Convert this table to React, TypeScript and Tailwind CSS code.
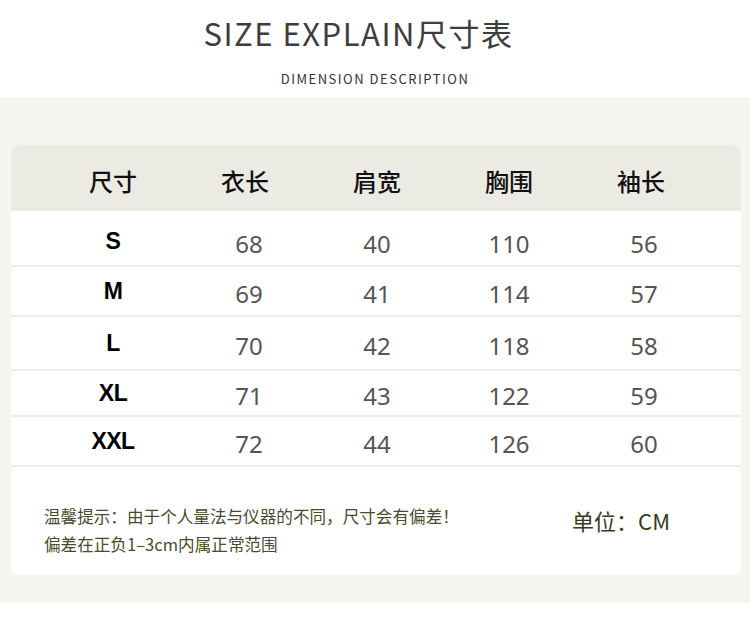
import React from "react";

const rows = [
  { size: "S", h: "h-[56px] pt-[6px]", v: ["68", "40", "110", "56"] },
  { size: "M", h: "h-[50px]", v: ["69", "41", "114", "57"] },
  { size: "L", h: "h-[54px]", v: ["70", "42", "118", "58"] },
  { size: "XL", h: "h-[46px]", v: ["71", "43", "122", "59"] },
  { size: "XXL", h: "h-[50px]", v: ["72", "44", "126", "60"] },
];

const heads = ["尺寸", "衣长", "肩宽", "胸围", "袖长"];
const shift = ["pl-[8px]", "pl-0", "pl-0", "pl-[6px]"];

export default function App() {
  return (
    <div className="h-[618px] w-[750px] bg-white font-['Noto_Sans','Noto_Sans_CJK_SC',sans-serif]">
      <div className="flex h-[97px] flex-col items-center">
        <h1 className="mt-[10px] h-[46px] pr-[33px] text-[31px] leading-[46px] font-normal tracking-[1.5px] text-[#3d3d3d] font-['Noto_Sans_CJK_SC',sans-serif]">
          SIZE EXPLAIN尺寸表
        </h1>
        <p className="mt-[14px] text-[13px] leading-[18px] tracking-[1.5px] text-[#333] font-['Noto_Sans_CJK_SC',sans-serif]">
          DIMENSION DESCRIPTION
        </p>
      </div>

      <div className="h-[506px] bg-[#f6f6f1] px-[11px] pt-[48px]">
        <div className="w-[730px] overflow-hidden rounded-[8px] bg-white shadow-[0_0_2px_rgba(0,0,0,0.04)]">
          <div className="grid h-[66px] grid-cols-[132px_132px_132px_132px_132px] items-center bg-[#ebeae3] pl-[36px] pt-[5px]">
            {heads.map((t) => (
              <div
                key={t}
                className="text-center text-[24px] font-medium text-[#111] font-['Noto_Sans_CJK_SC',sans-serif]"
              >
                {t}
              </div>
            ))}
          </div>

          {rows.map((r) => (
            <div
              key={r.size}
              className={`grid ${r.h} grid-cols-[132px_132px_132px_132px_132px] items-center border-b-2 border-[#efefea] pl-[36px]`}
            >
              <div className="text-center text-[23px] font-bold text-black font-['Liberation_Sans',sans-serif] tracking-[-0.5px]">
                {r.size}
              </div>
              {r.v.map((n, i) => (
                <div
                  key={i}
                  className={`${shift[i]} pt-[5px] text-center text-[24px] text-[#555] font-['Noto_Sans',sans-serif]`}
                >
                  {n}
                </div>
              ))}
            </div>
          ))}

          <div className="flex h-[108px] items-start justify-between pl-[33px] pr-[71px] pt-[35px]">
            <div className="text-[16.6px] leading-[28px] text-[#4a4a2c] font-['Noto_Sans_CJK_SC',sans-serif]">
              <p>温馨提示：由于个人量法与仪器的不同，尺寸会有偏差！</p>
              <p>偏差在正负1–3cm内属正常范围</p>
            </div>
            <div className="pt-[3px] text-[22px] leading-[30px] text-[#3a3a20] font-['Noto_Sans_CJK_SC',sans-serif]">
              单位：CM
            </div>
          </div>
        </div>
      </div>
      <div className="h-[15px] bg-white" />
    </div>
  );
}
